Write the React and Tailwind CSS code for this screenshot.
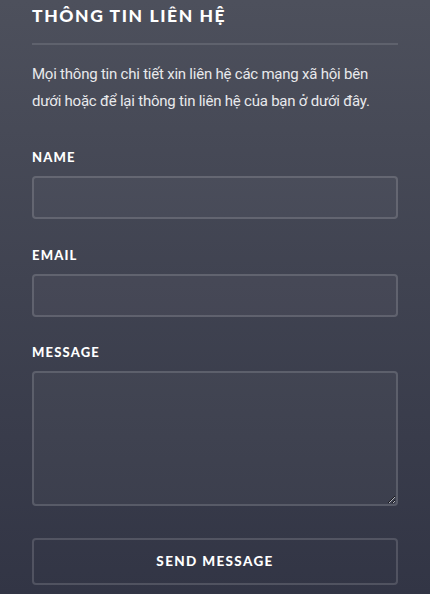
import React from 'react';

const Field = ({ label, children }) => (
  <div className="flex flex-col">
    <label className="text-[13px] font-black tracking-[0.09em] uppercase text-white leading-none">{label}</label>
    <div className="mt-[12px]">{children}</div>
  </div>
);

const App = () => {
  return (
    <div className="w-[430px] h-[594px] overflow-hidden bg-gradient-to-b from-[#4d505c] to-[#323545] font-['Lato',sans-serif] text-white">
      <div className="px-[32px] pt-[6px]">
        {/* Heading */}
        <h2 className="text-[17.5px] font-black tracking-[0.09em] leading-[17px] pt-px">THÔNG TIN LIÊN HỆ</h2>
        <div className="mt-[19px] h-[2px] w-[366px] bg-[#5f626d]" />

        <p className="mt-[16px] text-[15px] leading-[27px] tracking-[-0.015em] text-[#e8e9ec] font-['Roboto',sans-serif] whitespace-nowrap">
          Mọi thông tin chi tiết xin liên hệ các mạng xã hội bên
          <br />
          dưới hoặc để lại thông tin liên hệ của bạn ở dưới đây.
        </p>

        <form className="mt-[36px] flex flex-col gap-[29.5px]" onSubmit={(e) => e.preventDefault()}>
          <Field label="Name">
            <input type="text" className="block w-[366px] h-[43px] rounded-[4px] border-2 border-white/15 bg-white/[0.03] outline-none" />
          </Field>
          <Field label="Email">
            <input type="email" className="block w-[366px] h-[43px] rounded-[4px] border-2 border-white/15 bg-white/[0.03] outline-none" />
          </Field>
          <Field label="Message">
            <textarea className="block w-[366px] h-[135px] rounded-[4px] border-2 border-white/15 bg-white/[0.03] outline-none resize-y" />
          </Field>
          <button className="mt-[2px] w-[366px] h-[47px] rounded-[4px] border-2 border-white/15 text-[13.5px] font-black tracking-[0.1em] text-white">
            SEND MESSAGE
          </button>
        </form>
      </div>
    </div>
  );
};

export default App;
